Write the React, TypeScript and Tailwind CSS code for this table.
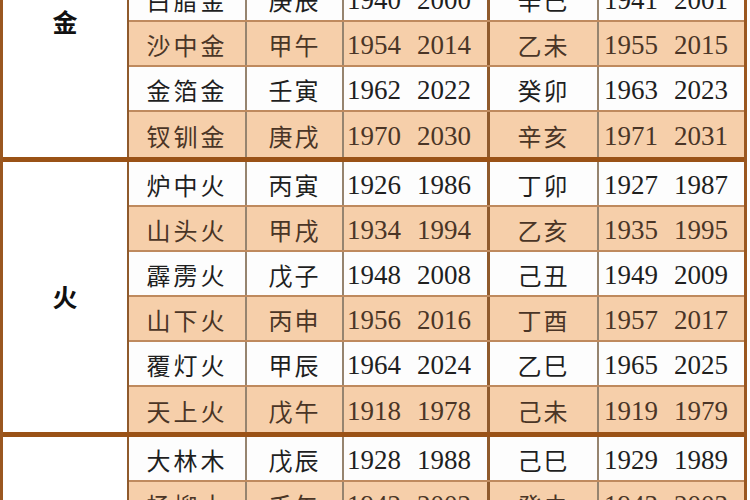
import React from "react";

type Row = [string, string, string, string, string, string, string];

const groups: { label: string; rows: Row[] }[] = [
  {
    label: "金",
    rows: [
      ["海中金", "甲子", "1924", "1984", "乙丑", "1925", "1985"],
      ["剑锋金", "壬申", "1932", "1992", "癸酉", "1933", "1993"],
      ["白腊金", "庚辰", "1940", "2000", "辛巳", "1941", "2001"],
      ["沙中金", "甲午", "1954", "2014", "乙未", "1955", "2015"],
      ["金箔金", "壬寅", "1962", "2022", "癸卯", "1963", "2023"],
      ["钗钏金", "庚戌", "1970", "2030", "辛亥", "1971", "2031"],
    ],
  },
  {
    label: "火",
    rows: [
      ["炉中火", "丙寅", "1926", "1986", "丁卯", "1927", "1987"],
      ["山头火", "甲戌", "1934", "1994", "乙亥", "1935", "1995"],
      ["霹雳火", "戊子", "1948", "2008", "己丑", "1949", "2009"],
      ["山下火", "丙申", "1956", "2016", "丁酉", "1957", "2017"],
      ["覆灯火", "甲辰", "1964", "2024", "乙巳", "1965", "2025"],
      ["天上火", "戊午", "1918", "1978", "己未", "1919", "1979"],
    ],
  },
  {
    label: "木",
    rows: [
      ["大林木", "戊辰", "1928", "1988", "己巳", "1929", "1989"],
      ["杨柳木", "壬午", "1942", "2002", "癸未", "1943", "2003"],
      ["松柏木", "庚寅", "1950", "2010", "辛卯", "1951", "2011"],
      ["平地木", "戊戌", "1958", "2018", "己亥", "1959", "2019"],
      ["桑柘木", "壬子", "1972", "2032", "癸丑", "1973", "2033"],
      ["石榴木", "庚申", "1920", "1980", "辛酉", "1921", "1981"],
    ],
  },
];

const cjk = "font-['Noto_Sans_CJK_SC','Noto_Sans',sans-serif]";
const serif = "font-['Liberation_Serif','Noto_Sans_CJK_SC',serif]";

const TableRow = ({ row, index, last }: { row: Row; index: number; last: boolean }) => {
  const peach = index % 2 === 1;
  const tone = peach ? "bg-[#f6cfaa] text-[#4a3526]" : "bg-[#fdfdfd] text-[#1f1f1f]";
  return (
    <div className={`flex h-[45px] ${tone} ${last ? "" : "border-b-2 border-[#bf8a5e]"}`}>
      <div className={`w-[118px] flex items-center justify-center pt-[3px] border-r-2 border-[#96846f] text-[24px] tracking-[3px] ${cjk}`}>
        {row[0]}
      </div>
      <div className={`w-[97px] flex items-center justify-center pt-[3px] border-r-2 border-[#96846f] text-[24px] tracking-[2px] ${cjk}`}>
        {row[1]}
      </div>
      <div className={`w-[146px] flex items-center gap-[16px] pl-[3px] pt-[3px] border-r-[3px] border-[#8f5a2c] text-[27px] ${serif}`}>
        <span>{row[2]}</span>
        <span>{row[3]}</span>
      </div>
      <div className={`w-[109px] flex items-center justify-center pt-[3px] border-r-2 border-[#96846f] text-[24px] tracking-[2px] ${cjk}`}>
        {row[4]}
      </div>
      <div className={`w-[145px] flex items-center gap-[16px] pl-[5px] pt-[3px] text-[27px] ${serif}`}>
        <span>{row[5]}</span>
        <span>{row[6]}</span>
      </div>
    </div>
  );
};

export default function App() {
  return (
    <div className="w-[750px] h-[500px] overflow-hidden bg-white">
      <div className="w-[747px] -mt-[113px] border-l-[3px] border-r-[3px] border-[#9a5720]">
        {groups.map((g) => (
          <div key={g.label} className="flex border-b-[5px] border-[#9a5216]">
            <div className={`w-[126px] flex items-center justify-center bg-white border-r-2 border-[#8f5a2c] text-[25px] font-semibold text-[#111] ${cjk}`}>
              {g.label}
            </div>
            <div className="flex flex-col">
              {g.rows.map((r, i) => (
                <TableRow key={r[0]} row={r} index={i} last={i === g.rows.length - 1} />
              ))}
            </div>
          </div>
        ))}
      </div>
    </div>
  );
}
